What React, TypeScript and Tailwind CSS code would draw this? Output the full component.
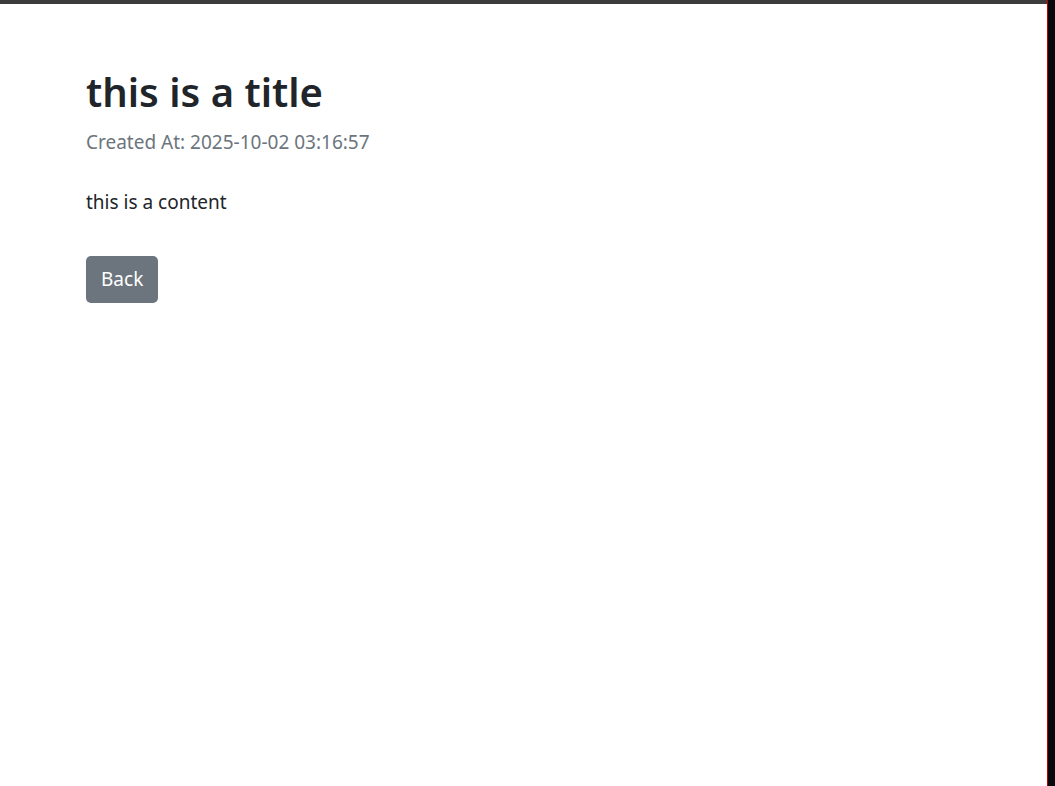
export default function App() {
  return (
    <div className="flex min-h-[786px] w-full bg-white" style={{ fontFamily: '"Noto Sans", "Open Sans", sans-serif' }}>
      <main className="flex-1 border-t-4 border-[#3c3c3c]">
        <div className="pl-[86px] pt-[63px]">
          <h1 className="text-[40px] leading-[50px] font-semibold text-[#212529]">this is a title</h1>
          <p className="mt-[10px] text-[19px] leading-[30px] text-[#6c757d]">Created At: 2025-10-02 03:16:57</p>
          <p className="mt-[30px] text-[19px] leading-[30px] text-[#212529]">this is a content</p>
          <button className="mt-[39px] h-[47px] rounded-[5px] bg-[#6c757d] px-[15px] text-[19px] text-white">
            Back
          </button>
        </div>
      </main>
      <aside className="w-[8px] border-l border-[#c00000] bg-[#07070c]" />
    </div>
  );
}
